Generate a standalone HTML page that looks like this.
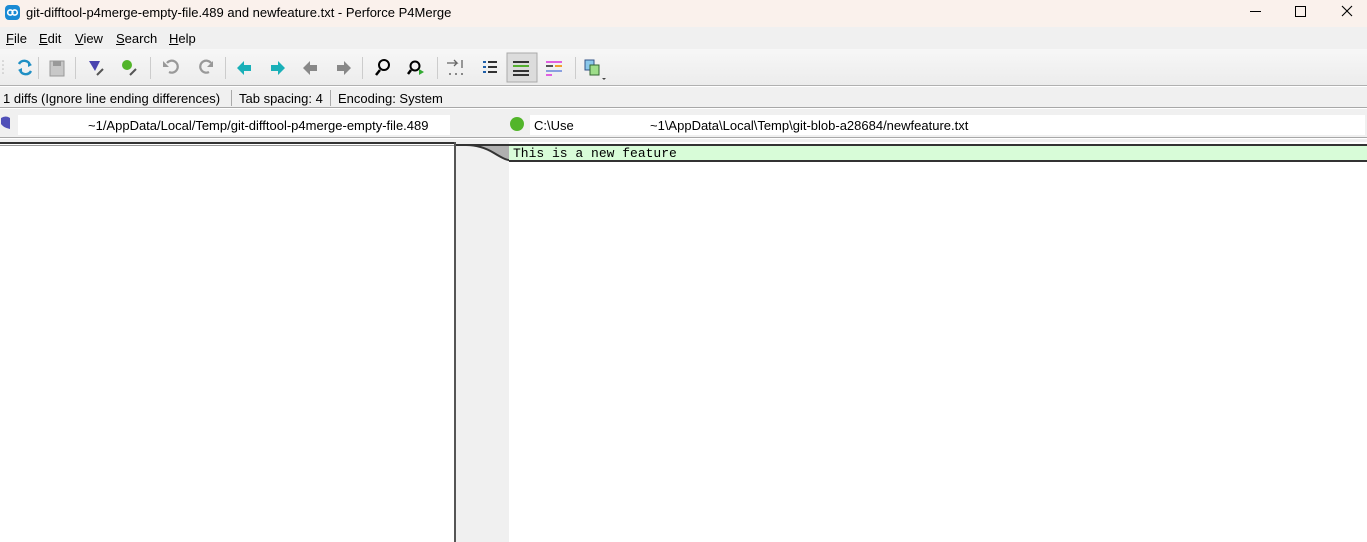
<!DOCTYPE html>
<html><head><meta charset="utf-8"><style>
*{margin:0;padding:0;box-sizing:border-box}
body{width:1367px;height:542px;overflow:hidden;background:#fff;font-family:"Liberation Sans",sans-serif;font-size:13px;color:#000;position:relative}
.abs{position:absolute}
#title{left:0;top:0;width:1367px;height:27px;background:#faf1ec}
#menu{left:0;top:27px;width:1367px;height:22px;background:#f0f0f0}
#tb{left:0;top:49px;width:1367px;height:37px;background:linear-gradient(#f7f7f7,#ececec);border-bottom:1px solid #b0b0b0}
#st{left:0;top:87px;width:1367px;height:21px;background:#f0f0f0;border-bottom:1px solid #a8a8a8}
#pb{left:0;top:109px;width:1367px;height:29px;background:#f0f0f0;border-bottom:1px solid #a8a8a8}
.sep{position:absolute;top:8px;width:1px;height:22px;background:#ccc}
</style></head><body>
<div id="title" class="abs">
 <svg class="abs" style="left:5px;top:5px" width="15" height="15"><rect width="15" height="15" rx="4" fill="#1a8ad4"/><circle cx="5.3" cy="7.5" r="2.6" fill="none" stroke="#fff" stroke-width="1.6"/><circle cx="9.7" cy="7.5" r="2.6" fill="none" stroke="#fff" stroke-width="1.6"/></svg>
 <div class="abs" style="left:26px;top:5px;font-size:13px">git-difftool-p4merge-empty-file.489 and newfeature.txt - Perforce P4Merge</div>
 <div class="abs" style="left:1250px;top:11px;width:11px;height:1px;background:#000"></div>
 <div class="abs" style="left:1295px;top:6px;width:11px;height:11px;border:1px solid #000"></div>
 <svg class="abs" style="left:1341px;top:5px" width="12" height="12"><path d="M1 1L11 11M11 1L1 11" stroke="#000" stroke-width="1.1"/></svg>
</div>
<div id="menu" class="abs">
 <div class="abs" style="left:6px;top:4px"><u>F</u>ile</div>
 <div class="abs" style="left:39px;top:4px"><u>E</u>dit</div>
 <div class="abs" style="left:75px;top:4px"><u>V</u>iew</div>
 <div class="abs" style="left:116px;top:4px"><u>S</u>earch</div>
 <div class="abs" style="left:169px;top:4px"><u>H</u>elp</div>
</div>
<div id="tb" class="abs">
 <svg class="abs" style="left:0;top:0" width="640" height="37">
  <g fill="#bbb"><circle cx="3" cy="12" r=".8"/><circle cx="3" cy="16" r=".8"/><circle cx="3" cy="20" r=".8"/><circle cx="3" cy="24" r=".8"/></g>
  <path d="M19 15a6 6 0 0 1 11 1M31 22a6 6 0 0 1-11-1" stroke="#1f8fc4" stroke-width="2.4" fill="none"/>
  <path d="M28 13l4 3-4 2zM22 24l-4-3 4-2z" fill="#1f8fc4"/>
  <rect x="50" y="12" width="14" height="15" fill="#c8c8c8" stroke="#999"/><rect x="53" y="12" width="8" height="5" fill="#999"/>
  <path d="M89 12h11l-5 10z" fill="#4a44b0"/><path d="M97 26l6-6" stroke="#555" stroke-width="2"/>
  <circle cx="127" cy="16" r="5" fill="#52b52a"/><path d="M130 26l6-6" stroke="#555" stroke-width="2"/>
  <path d="M167 14a6 6 0 1 1 2 9" stroke="#999" stroke-width="2.2" fill="none"/><path d="M163 12v6h6z" fill="#999"/>
  <path d="M211 14a6 6 0 1 0-2 9" stroke="#999" stroke-width="2.2" fill="none"/><path d="M213 12v6h-6z" fill="#999"/>
  <path d="M237 19l7-7v4h7v6h-7v4z" fill="#1ab0b8"/><path d="M285 19l-7-7v4h-7v6h7v4z" fill="#1ab0b8"/>
  <path d="M303 19l7-7v4h7v6h-7v4z" fill="#888"/><path d="M351 19l-7-7v4h-7v6h7v4z" fill="#888"/>
  <circle cx="384" cy="16" r="5" stroke="#000" stroke-width="2" fill="none"/><path d="M380 21l-4 5" stroke="#000" stroke-width="2.5"/>
  <circle cx="415" cy="17" r="4.5" stroke="#000" stroke-width="2" fill="none"/><path d="M411 21l-3 4" stroke="#000" stroke-width="2.5"/><path d="M419 20l5 3-5 3z" fill="#3a3"/>
  <path d="M447 14h10l-3-3M457 14l-3 3M462 11v8" stroke="#666" stroke-width="1.3" fill="none"/><g fill="#666"><circle cx="450" cy="25" r="1"/><circle cx="456" cy="25" r="1"/><circle cx="462" cy="25" r="1"/></g>
  <g fill="#1f5fa8"><rect x="483" y="12" width="3" height="2"/><rect x="483" y="17" width="3" height="2"/><rect x="483" y="22" width="3" height="2"/></g><g stroke="#333" stroke-width="2"><path d="M488 13h9M488 18h9M488 23h9"/></g>
  <rect x="507" y="4" width="30" height="29" fill="#dcdcdc" stroke="#aaa"/><g stroke-width="2"><path d="M513 13h16M513 22h16" stroke="#333"/><path d="M513 17h16" stroke="#55b030"/><path d="M513 26h16" stroke="#333"/></g>
  <g stroke-width="2"><path d="M546 13h16" stroke="#e060e0"/><path d="M546 17h7" stroke="#555"/><path d="M555 17h7" stroke="#f0a030"/><path d="M546 22h16" stroke="#8aa0e0"/><path d="M546 26h6" stroke="#e060e0"/></g>
  <rect x="585" y="11" width="9" height="10" fill="#8ac8ea" stroke="#358"/><rect x="590" y="16" width="9" height="10" fill="#9ede8a" stroke="#363"/><path d="M602 29h4l-2 2z" fill="#444"/>
 </svg>
 <div class="sep" style="left:38px"></div><div class="sep" style="left:75px"></div><div class="sep" style="left:150px"></div><div class="sep" style="left:225px"></div><div class="sep" style="left:362px"></div><div class="sep" style="left:437px"></div><div class="sep" style="left:575px"></div>
</div>
<div id="st" class="abs">
 <div class="abs" style="left:3px;top:4px">1 diffs (Ignore line ending differences)</div>
 <div class="abs" style="left:231px;top:3px;width:1px;height:16px;background:#aaa"></div>
 <div class="abs" style="left:239px;top:4px">Tab spacing: 4</div>
 <div class="abs" style="left:330px;top:3px;width:1px;height:16px;background:#aaa"></div>
 <div class="abs" style="left:338px;top:4px">Encoding: System</div>
</div>
<div id="pb" class="abs">
 <svg class="abs" style="left:1px;top:7px" width="10" height="14"><path d="M0 2q5-3 9 0v11q-6-1-9-5z" fill="#5050b8"/></svg>
 <div class="abs" style="left:18px;top:6px;width:432px;height:20px;background:#fff"></div>
 <div class="abs" style="left:88px;top:9px">~1/AppData/Local/Temp/git-difftool-p4merge-empty-file.489</div>
 <div class="abs" style="left:510px;top:8px;width:14px;height:14px;border-radius:50%;background:#52b52a"></div>
 <div class="abs" style="left:530px;top:6px;width:835px;height:20px;background:#fff"></div>
 <div class="abs" style="left:534px;top:9px">C:\Use</div>
 <div class="abs" style="left:650px;top:9px">~1\AppData\Local\Temp\git-blob-a28684/newfeature.txt</div>
</div>
<div class="abs" style="left:0;top:139px;width:1367px;height:3px;background:#f0f0f0"></div>
<div class="abs" style="left:0;top:142px;width:455px;height:2px;background:#333"></div>
<div class="abs" style="left:0;top:145px;width:455px;height:1px;background:#999"></div>
<div class="abs" style="left:454px;top:142px;width:2px;height:400px;background:#555"></div>
<div class="abs" style="left:456px;top:142px;width:53px;height:400px;background:#f0f0f0"></div>
<svg class="abs" style="left:456px;top:142px" width="54" height="22"><path d="M0 3h10q15 0 28 8t16 7v-15z" fill="#b0b0b0"/><path d="M0 3h10q15 0 28 8t16 7" fill="none" stroke="#333" stroke-width="2"/><path d="M0 3h54" stroke="#333" stroke-width="2"/></svg>
<div class="abs" style="left:509px;top:144px;width:858px;height:18px;background:#d8fcd8;border-top:2px solid #333;border-bottom:2px solid #333"></div>
<div class="abs" style="left:513px;top:146px;font-family:'Liberation Mono',monospace;font-size:13px">This is a new feature</div>
</body></html>
